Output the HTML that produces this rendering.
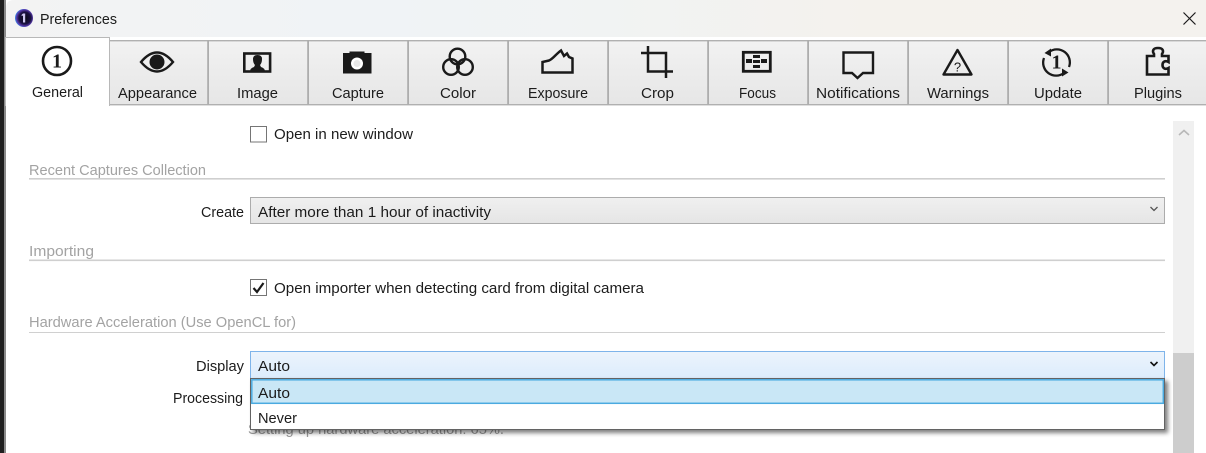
<!DOCTYPE html>
<html><head><meta charset="utf-8"><title>Preferences</title>
<style>
html,body{margin:0;padding:0;width:1206px;height:453px;overflow:hidden;background:#fff}
svg{display:block}
text{font-family:"Liberation Sans",Arial,sans-serif;font-size:14.5px;fill:#1c1c1c}
.h{fill:#a3a3a3}
</style></head><body>
<svg width="1206" height="453" viewBox="0 0 1206 453" xmlns="http://www.w3.org/2000/svg">
<defs>
<linearGradient id="tb" x1="0" x2="1" y1="0" y2="0"><stop offset="0" stop-color="#f3f3f3"/><stop offset=".3" stop-color="#f0f3f6"/><stop offset=".5" stop-color="#f1f3f3"/><stop offset=".72" stop-color="#f4f2ed"/><stop offset="1" stop-color="#f4f2ee"/></linearGradient>
<linearGradient id="tab" x1="0" x2="0" y1="0" y2="1"><stop offset="0" stop-color="#f2f2f2"/><stop offset="1" stop-color="#e6e6e6"/></linearGradient>
<linearGradient id="sel" x1="0" x2="0" y1="0" y2="1"><stop offset="0" stop-color="#f0f0f0"/><stop offset="1" stop-color="#e5e5e5"/></linearGradient>
<linearGradient id="selb" x1="0" x2="0" y1="0" y2="1"><stop offset="0" stop-color="#ecf4fc"/><stop offset="1" stop-color="#dcecfc"/></linearGradient>
<filter id="sh" x="-2%" y="-20%" width="104%" height="140%"><feDropShadow dx="3" dy="3" stdDeviation="2" flood-color="#000" flood-opacity=".5"/></filter>
<radialGradient id="lg" cx=".55" cy=".5" r=".55"><stop offset="0" stop-color="#0a0a14"/><stop offset=".6" stop-color="#1a1040"/><stop offset=".85" stop-color="#5a3bb0"/><stop offset="1" stop-color="#2f8fe8"/></radialGradient>
</defs>

<rect width="1206" height="453" fill="#fff"/>
<rect x="0" y="0" width="4" height="453" fill="#1f1f1f"/>
<rect x="4" y="0" width="2" height="453" fill="#8a8a8a"/>
<path d="M6 37V8Q6 0 14 0H1206V37Z" fill="url(#tb)"/>
<rect x="0" y="0" width="4" height="8" fill="#1f1f1f"/>

<!-- title -->
<circle cx="24" cy="18" r="9" fill="url(#lg)"/>
<path d="M23 13.5h2.2v9H23v-7l-1.4.6v-1.2z" fill="#cfc8f0"/>
<text x="40" y="24" textLength="77" lengthAdjust="spacingAndGlyphs">Preferences</text>
<path d="M1183.500 12.500L1195.500 24.500M1195.500 12.500L1183.500 24.500" stroke="#1a1a1a" stroke-width="1.2" fill="none"/>

<!-- tab strip -->
<rect x="109" y="40" width="1097" height="65" fill="url(#tab)"/>
<rect x="109" y="40" width="1097" height="1.400" fill="#b0b0b0"/>
<rect x="109" y="104" width="1097" height="1.400" fill="#b0b0b0"/>
<g fill="#adadad">
<rect x="207.200" y="40" width="1.800" height="65"/><rect x="307.200" y="40" width="1.800" height="65"/><rect x="407.200" y="40" width="1.800" height="65"/><rect x="507.200" y="40" width="1.800" height="65"/><rect x="607.200" y="40" width="1.800" height="65"/><rect x="707.200" y="40" width="1.800" height="65"/><rect x="807.200" y="40" width="1.800" height="65"/><rect x="907.200" y="40" width="1.800" height="65"/><rect x="1007.200" y="40" width="1.800" height="65"/><rect x="1107.200" y="40" width="1.800" height="65"/>
</g>
<!-- active tab -->
<rect x="5" y="37" width="105" height="69" fill="#fff"/>
<path d="M5.500 106V37.500H109.500V106" fill="none" stroke="#b8b8b8" stroke-width="1"/>

<!-- tab labels -->
<text x="32" y="97" textLength="51" lengthAdjust="spacingAndGlyphs">General</text>
<text x="118" y="98" textLength="79" lengthAdjust="spacingAndGlyphs">Appearance</text>
<text x="237" y="98" textLength="41" lengthAdjust="spacingAndGlyphs">Image</text>
<text x="332" y="98" textLength="52" lengthAdjust="spacingAndGlyphs">Capture</text>
<text x="440" y="98" textLength="36" lengthAdjust="spacingAndGlyphs">Color</text>
<text x="528" y="98" textLength="60" lengthAdjust="spacingAndGlyphs">Exposure</text>
<text x="641" y="98" textLength="33" lengthAdjust="spacingAndGlyphs">Crop</text>
<text x="739" y="98" textLength="37" lengthAdjust="spacingAndGlyphs">Focus</text>
<text x="816" y="98" textLength="84" lengthAdjust="spacingAndGlyphs">Notifications</text>
<text x="927" y="98" textLength="62" lengthAdjust="spacingAndGlyphs">Warnings</text>
<text x="1034" y="98" textLength="48" lengthAdjust="spacingAndGlyphs">Update</text>
<text x="1134" y="98" textLength="48" lengthAdjust="spacingAndGlyphs">Plugins</text>

<!-- icons -->
<g fill="none" stroke="#1a1a1a" stroke-width="2.400">
<circle cx="57" cy="61" r="14" stroke-width="2.600"/>
<path d="M141 62Q157 43 173 62Q157 81 141 62Z"/>
<circle cx="157" cy="62" r="7.500" fill="#1a1a1a" stroke="none"/>
<rect x="244.300" y="53.500" width="25.800" height="18" stroke-width="2.600"/>
<path d="M648 46V71.500H673M641 53H666V78" stroke-width="2.500"/>
<circle cx="457.500" cy="56.500" r="7.800"/>
<circle cx="451" cy="67" r="7.800"/>
<circle cx="465" cy="67" r="7.800"/>
<path d="M542.500 72.500V62L549 60.500C553 59 556 54 561 50.500L564 56L567 53.500L569 57L572.500 58.500V72.500Z" stroke-width="2.500"/>
<rect x="743.300" y="52.300" width="27" height="19" stroke-width="2.800"/>
<path d="M843.500 52.500H873V73H863L857.500 78L852 73H843.500Z" stroke-width="2.400"/>
<path d="M957.500 50L971.500 74.500H943.500Z" stroke-width="2.400" stroke-linejoin="round"/>
<path d="M1069 67A13 13 0 0 0 1049 52M1044 58A13 13 0 0 0 1064 73" stroke-width="2.300"/>
<path d="M1147 56H1154V54C1152 51 1153 48 1158 48C1163 48 1164 51 1162 54V56H1168.500V62C1165 60 1162.500 62 1162.500 65C1162.500 68 1165 70 1168.500 68V74.500H1147Z" stroke-width="2.600"/>
</g>
<g fill="#1a1a1a">
<path d="M250 72Q250 68 254 67L255 65Q253 63 253 59Q253 55 257.500 55Q262 55 262 59Q262 63 260 65L261 67Q265 68 265 72Z"/>
<path d="M343 53H349.500V51.500H364.500V53H371.500V73.500H343Z"/>
<rect x="746" y="59" width="6" height="4"/><rect x="761" y="59" width="6" height="4"/>
<rect x="753" y="55" width="7" height="3"/><rect x="753" y="60" width="7" height="3"/><rect x="753" y="65" width="7" height="3"/>
<path d="M1051 48.500V56.500L1044.500 53Z"/>
<path d="M1062 68.500V76.500L1068.500 72.500Z"/>
</g>
<circle cx="357" cy="63.500" r="6" fill="#fff"/>
<circle cx="357" cy="63.500" r="3.500" fill="#e8e8e8"/>
<text x="57" y="67.500" text-anchor="middle" style="font-family:'Liberation Serif',serif;font-size:20px;font-weight:bold;fill:#1a1a1a">1</text>
<text x="1056.500" y="68.500" text-anchor="middle" style="font-family:'Liberation Serif',serif;font-size:20px;font-weight:bold;fill:#1a1a1a">1</text>
<text x="957.500" y="71.500" text-anchor="middle" style="font-size:13px;fill:#1a1a1a">?</text>

<!-- content -->
<rect x="250.500" y="126.500" width="16" height="15.500" fill="#fff" stroke="#757575"/>
<text x="274" y="139" textLength="139" lengthAdjust="spacingAndGlyphs">Open in new window</text>

<text class="h" x="29" y="175" textLength="177" lengthAdjust="spacingAndGlyphs">Recent Captures Collection</text>
<rect x="29" y="178" width="1136" height="1.600" fill="#cfcfcf"/>

<text x="201" y="217" textLength="43" lengthAdjust="spacingAndGlyphs">Create</text>
<rect x="250.500" y="197.500" width="914" height="26" fill="url(#sel)" stroke="#acacac"/>
<text x="258" y="217" textLength="233" lengthAdjust="spacingAndGlyphs">After more than 1 hour of inactivity</text>
<path d="M1150.500 207L1154 210.500L1157.500 207" fill="none" stroke="#555" stroke-width="1.300"/>

<text class="h" x="29" y="256" textLength="65" lengthAdjust="spacingAndGlyphs">Importing</text>
<rect x="29" y="259.500" width="1136" height="1.600" fill="#cfcfcf"/>

<rect x="250.500" y="279.500" width="16" height="16" fill="#fff" stroke="#757575"/>
<path d="M253.500 288L257 292L263.500 283" fill="none" stroke="#1a1a1a" stroke-width="2.200"/>
<text x="274" y="293" textLength="370" lengthAdjust="spacingAndGlyphs">Open importer when detecting card from digital camera</text>

<text class="h" x="29" y="327" textLength="267" lengthAdjust="spacingAndGlyphs">Hardware Acceleration (Use OpenCL for)</text>
<rect x="29" y="332" width="1136" height="1" fill="#d0d0d0"/>

<text x="196" y="371" textLength="48" lengthAdjust="spacingAndGlyphs">Display</text>
<rect x="250.500" y="351.500" width="914" height="27" fill="url(#selb)" stroke="#7eb4ea"/>
<text x="258" y="371" textLength="32" lengthAdjust="spacingAndGlyphs">Auto</text>
<path d="M1150.500 362L1154 365.500L1157.500 362" fill="none" stroke="#111" stroke-width="1.600"/>

<text x="173" y="403" textLength="70" lengthAdjust="spacingAndGlyphs">Processing</text>
<text x="248" y="434" textLength="256" lengthAdjust="spacingAndGlyphs" style="fill:#9a9a9a">Setting up hardware acceleration: 65%.</text>

<!-- popup -->
<rect x="250.500" y="378.500" width="914" height="51" fill="#fff" stroke="#646464" filter="url(#sh)"/>
<rect x="251.800" y="379.800" width="911.500" height="23.500" fill="#c9e7f6" stroke="#4aaae0" stroke-width="1.500"/>
<text x="258" y="398" textLength="32" lengthAdjust="spacingAndGlyphs">Auto</text>
<text x="258" y="423" textLength="39" lengthAdjust="spacingAndGlyphs">Never</text>

<!-- scrollbar -->
<rect x="1173" y="121" width="21" height="332" fill="#f0f0f0"/>
<rect x="1173" y="353" width="21" height="100" fill="#cdcdcd"/>
<path d="M1179 135L1184 130.500L1189 135" fill="none" stroke="#b8b8b8" stroke-width="1.600"/>
</svg>
</body></html>
